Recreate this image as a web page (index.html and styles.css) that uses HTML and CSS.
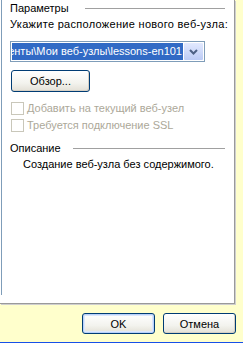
FILE: index.html
```html
<!DOCTYPE html>
<html lang="ru">
<head>
    <meta charset="UTF-8">
    <title>Новый веб-узел</title>
    <link rel="stylesheet" href="styles.css">
</head>
<body>

<div class="dialog">
    <!-- Панель параметров -->
    <div class="pane">
        <div class="pane-inner">
            <div class="group-title params">Параметры</div>
            <div class="label">Укажите расположение нового веб-узла:</div>

            <div class="combo">
                <div class="combo-field">
                    <span class="combo-text">C:\Documents and Settings\Admin\Мои документы\Мои веб-узлы\lessons-en101</span>
                </div>
                <div class="combo-arrow">
                    <svg width="9" height="6" viewBox="0 0 9 6">
                        <polyline points="1,1 4.5,4.5 8,1" fill="none" stroke="#4D6185" stroke-width="2"/>
                    </svg>
                </div>
            </div>

            <button class="btn browse">Обзор...</button>

            <div class="check"><span class="box"></span>Добавить на текущий веб-узел</div>
            <div class="check"><span class="box"></span>Требуется подключение SSL</div>

            <div class="group-title desc">Описание</div>
            <div class="desc-text">Создание веб-узла без содержимого.</div>
        </div>
    </div>

    <!-- Кнопки -->
    <div class="footer">
        <button class="btn default">OK</button>
        <button class="btn">Отмена</button>
    </div>
</div>

</body>
</html>
```

FILE: styles.css
```css
body {
    margin: 0;
    background-color: #FFFFCC;
    font-family: "Liberation Sans", Arial, sans-serif;
    font-size: 11px;
    line-height: 13px;
    color: #000;
}
.dialog {
    height: 343px;
    box-sizing: border-box;
    border-bottom: 1px solid #1750E8;
    display: flex;
    flex-direction: column;
}
.pane {
    width: 235px;
    height: 304px;
    box-sizing: border-box;
    background-color: #fff;
    padding-left: 1px;
    border-right: 1px solid #9A9A9A;
    border-bottom: 1px solid #9A9A9A;
    box-shadow: 1px 1px 0 #CFCFCF;
}
.pane-inner {
    height: 295px;
    box-sizing: border-box;
    border-left: 1px solid #7F9DB9;
    padding: 2px 9px 0 8px;
}
.group-title {
    display: flex;
    align-items: center;
}
.group-title::after {
    content: '';
    flex: 1;
    border-top: 1px solid #A0A0A0;
}
.params::after {
    margin-left: 16px;
}
.desc {
    margin-top: 10px;
}
.desc::after {
    margin-left: 12px;
}
.label {
    margin-top: 3px;
    white-space: nowrap;
    letter-spacing: 0.3px;
}
.combo {
    display: flex;
    width: 195px;
    height: 21px;
    box-sizing: border-box;
    margin-top: 10px;
    padding: 1px;
    gap: 1px;
    border: 1px solid #7F9DB9;
}
.combo-field {
    width: 171px;
    display: flex;
    justify-content: flex-end;
    align-items: center;
    overflow: hidden;
    white-space: nowrap;
    background-color: #316AC5;
    color: #fff;
}
.combo-text {
    padding-right: 1px;
}
.combo-arrow {
    width: 19px;
    display: flex;
    justify-content: center;
    align-items: center;
    background: linear-gradient(#E2E9FE, #BCCBF6);
    border-radius: 1px;
}
.btn {
    font-family: inherit;
    font-size: 11px;
    color: #000;
    height: 21px;
    padding: 0;
    border: 1px solid #003C74;
    border-radius: 3px;
    background: linear-gradient(#FFFFFF, #F3F3EE 60%, #E3E0D6);
    box-shadow: inset -1px -1px 0 #D6D0C5;
}
.btn.default {
    box-shadow: inset 0 0 0 1px #B9D1FA, inset 0 0 0 2px #DCE7FC;
}
.browse {
    display: block;
    width: 79px;
    height: 22px;
    margin: 8px 0 0 1px;
}
.check {
    display: flex;
    align-items: center;
    gap: 3px;
    height: 13px;
    margin: 4px 0 0 1px;
    color: #ACA899;
    white-space: nowrap;
}
.browse + .check {
    margin-top: 10px;
}
.box {
    width: 11px;
    height: 11px;
    border: 1px solid #C9C7BA;
    background-color: #fff;
}
.desc-text {
    margin-top: 3px;
    padding-left: 13px;
}
.footer {
    flex: 1;
    display: flex;
    justify-content: flex-end;
    align-items: flex-start;
    gap: 8px;
    padding: 9px 7px 0 0;
}
.footer .btn {
    width: 73px;
}
```
